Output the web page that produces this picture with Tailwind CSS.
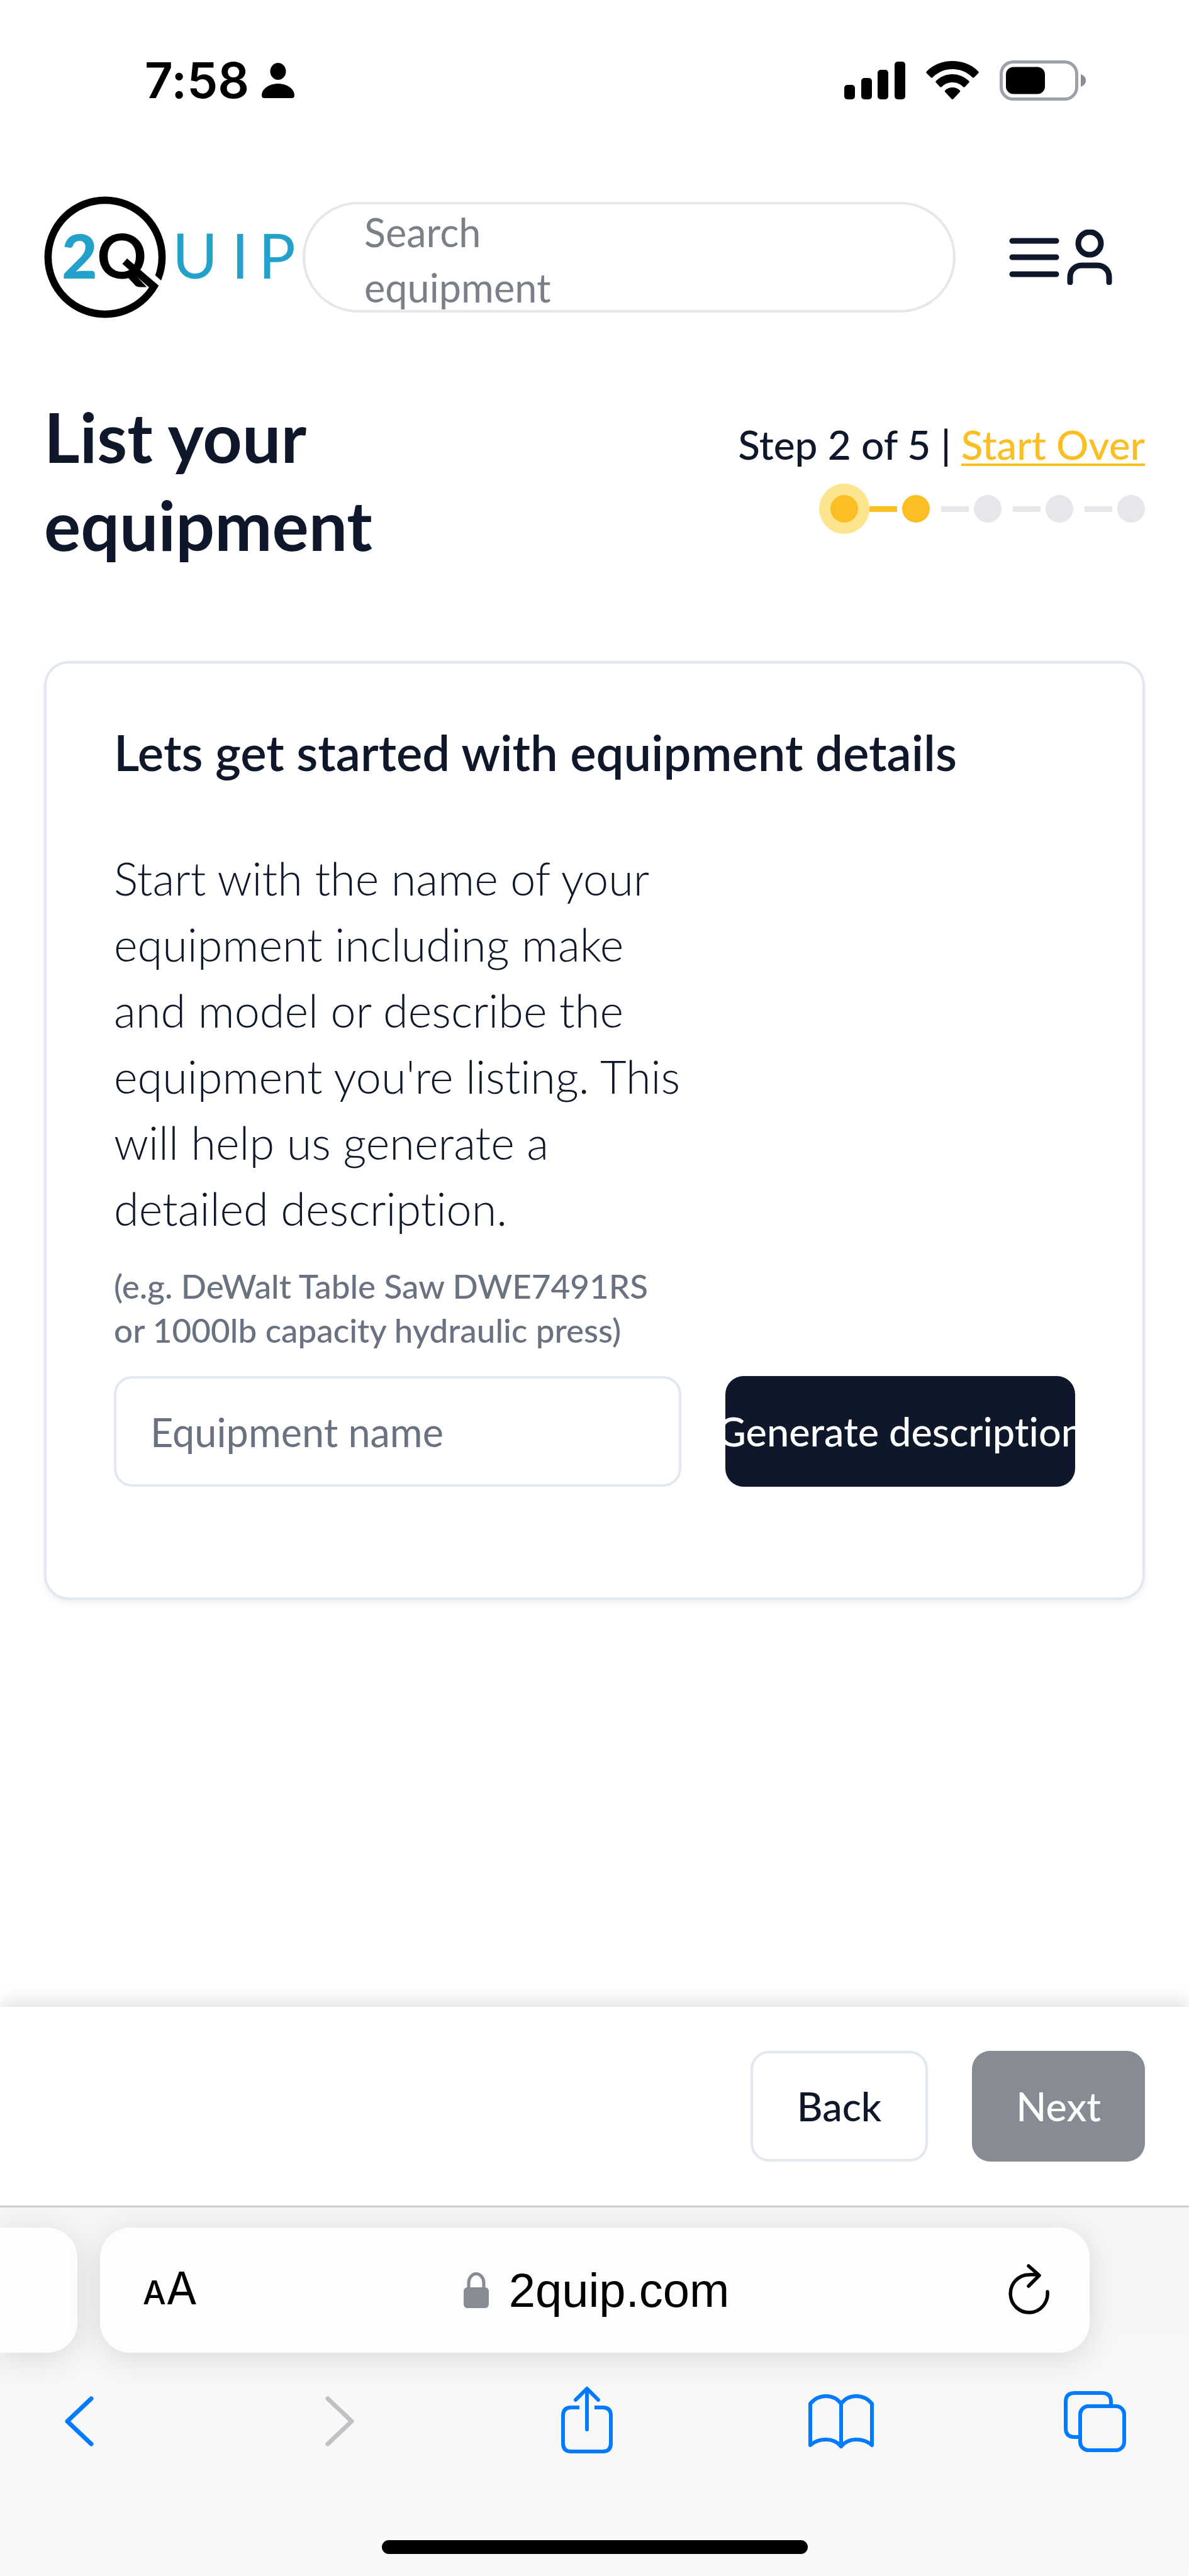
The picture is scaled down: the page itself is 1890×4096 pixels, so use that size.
<!DOCTYPE html>
<html lang="en">
<head>
    <meta charset="UTF-8">
    <meta name="viewport" content="width=device-width, initial-scale=1.0">
    <title>2Quip - List your equipment</title>
    <script src="https://cdn.jsdelivr.net/npm/@tailwindcss/browser@4"></script>
</head>
<body class="bg-white font-['Lato',sans-serif] [font-variant-ligatures:none] text-[#0f172a] text-[63px] leading-[88px] min-h-screen flex flex-col overflow-x-hidden">

    <!-- Status bar -->
    <div class="flex items-center justify-between pl-[230px] pr-[164px] pt-[84px] text-black">
        <div class="flex items-center gap-[20px]">
            <span class="font-['Inter',sans-serif] font-semibold text-[78px]">7:58</span>
            <svg class="w-[52px] h-[56px]" viewBox="0 0 52 56" fill="currentColor" aria-hidden="true">
                <ellipse cx="26" cy="13.5" rx="12.5" ry="13.5"/>
                <path d="M26 33c15 0 26 9 26 18.500c0 3-1.500 4.500-4.500 4.500h-43c-3 0-4.500-1.500-4.500-4.500C0 42 11 33 26 33z"/>
            </svg>
        </div>
        <div class="flex items-center">
            <svg class="w-[97px] h-[64px]" viewBox="0 0 97 64" fill="currentColor" aria-hidden="true">
                <rect x="0" y="39" width="17" height="23" rx="5"/>
                <rect x="27" y="28" width="17" height="34" rx="5"/>
                <rect x="53" y="15" width="17" height="47" rx="5"/>
                <rect x="80" y="2" width="17" height="60" rx="5"/>
            </svg>
            <svg class="w-[84px] h-[64px] ml-[33px]" viewBox="0 0 84 64" fill="currentColor" aria-hidden="true">
                <path d="M42 1C26 1 11 7 1 17.500q-1.500 1.500 0 3L7.500 27q1.500 1.500 3 0C19 18.500 30 14 42 14s23 4.500 31.500 13q1.500 1.500 3 0L83 20.500q1.500-1.500 0-3C73 7 58 1 42 1z"/>
                <path d="M42 22c-10 0-19 4-26 10.500q-1.500 1.500 0 3l6 6.500q1.500 1.500 3 0c4.500-4.500 10.500-7 17-7s12.500 2.500 17 7q1.500 1.500 3 0l6-6.500q1.500-1.500 0-3C61 26 52 22 42 22z"/>
                <path d="M42 43c-4.500 0-8.500 1.500-11.500 4.500q-1.500 1.500 0 3l10 10.700q1.500 1.500 3 0l10-10.700q1.500-1.500 0-3C50.500 44.500 46.500 43 42 43z"/>
            </svg>
            <svg class="w-[137px] h-[64px] ml-[33px]" viewBox="0 0 137 64" aria-hidden="true">
                <rect x="2.500" y="2.500" width="120" height="59" rx="19" fill="none" stroke="#9ca0a8" stroke-width="5"/>
                <rect x="10" y="10.500" width="62" height="43" rx="12" fill="black"/>
                <path d="M129 22q8 3 8 10t-8 10z" fill="#878b94"/>
            </svg>
        </div>
    </div>

    <!-- Site header -->
    <header class="flex items-center pl-[70px] pr-[122px] mt-[140px]">
        <a href="#" class="shrink-0" aria-label="2Quip home">
            <svg class="w-[411px] h-[194px]" viewBox="0 0 411 194" aria-hidden="true">
                <circle cx="97" cy="97" r="90.6" fill="none" stroke="black" stroke-width="11.6"/>
                <path d="M170 126L200 152" stroke="white" stroke-width="9"/>
                <path d="M132 99L182 142L174 154L167 145L124.500 107.400z"/>
                <text x="28" y="131" font-size="98" font-weight="900" fill="#24a1cb">2</text>
                <text x="84" y="131" font-size="98" font-weight="700">Q</text>
                <text x="204 298 341" y="131" font-size="98" font-weight="400" fill="#24a1cb">UIP</text>
            </svg>
        </a>
        <label for="search" class="sr-only">Search equipment</label>
        <textarea id="search" rows="2" placeholder="Search equipment" class="block grow h-[176px] border-4 border-gray-200 rounded-full pl-[94px] pr-[540px] resize-none overflow-hidden outline-none placeholder:text-[#7b7f88]"></textarea>
        <button aria-label="Menu" class="ml-[81px]">
            <svg class="w-[88px] h-[88px]" viewBox="0 0 88 88" fill="none" stroke="currentColor" stroke-width="9" stroke-linecap="round" aria-hidden="true">
                <path d="M9 18H79M9 44H79M9 71H79"/>
            </svg>
        </button>
        <button aria-label="Account">
            <svg class="w-[80px] h-[88px]" viewBox="0 0 80 88" fill="none" stroke="currentColor" stroke-width="9" stroke-linecap="round" aria-hidden="true">
                <circle cx="44" cy="22" r="18"/>
                <path d="M13 84V75A18 18 0 0 1 31 57H57A18 18 0 0 1 75 75V84"/>
            </svg>
        </button>
    </header>

    <main class="grow px-[70px] pt-[118px]">

        <!-- Title and steps -->
        <div class="flex justify-between">
            <h1 class="w-[600px] text-[109px] leading-[140px] font-bold">List your equipment</h1>
            <div class="flex flex-col items-end pt-[39px]">
                <p class="text-[64px] font-medium">Step 2 of 5 | <a href="#" class="text-[#fbbf24] underline underline-offset-[6px] decoration-4">Start Over</a></p>
                <ol class="flex items-center mt-[36px]" aria-label="Progress">
                    <li class="size-[44px] rounded-full bg-[#fbbf24] ring-[18px] ring-[#fde58f]"></li>
                    <li class="w-[44px] h-[9px] ml-[18px] mr-[8px] bg-[#fbbf24]"></li>
                    <li class="size-[44px] rounded-full bg-[#fbbf24]"></li>
                    <li class="w-[44px] h-[9px] ml-[18px] mr-[8px] bg-gray-200"></li>
                    <li class="size-[44px] rounded-full bg-gray-200"></li>
                    <li class="w-[44px] h-[9px] ml-[18px] mr-[8px] bg-gray-200"></li>
                    <li class="size-[44px] rounded-full bg-gray-200"></li>
                    <li class="w-[44px] h-[9px] ml-[18px] mr-[8px] bg-gray-200"></li>
                    <li class="size-[44px] rounded-full bg-gray-200"></li>
                </ol>
            </div>
        </div>

        <!-- Equipment details card -->
        <section class="mt-[147px] border-4 border-slate-200 rounded-[39px] px-[107px] pt-[89px] pb-[176px] shadow-[0_5px_10px_rgba(0,0,0,0.06)]">
            <h2 class="text-[78px] leading-[104px] font-semibold">Lets get started with equipment details</h2>
            <form class="grid grid-cols-[902fr_556fr] gap-x-[70px] mt-[96px]">
                <div class="col-start-1">
                    <p class="text-[72px] leading-[105px] font-light">Start with the name of your equipment including make and model or describe the equipment you're listing. This will help us generate a detailed description.</p>
                    <label for="equipment" class="block mt-[36px] text-[53px] leading-[70px] font-medium text-gray-500">(e.g. DeWalt Table Saw DWE7491RS or 1000lb capacity hydraulic press)</label>
                </div>
                <input id="equipment" type="text" placeholder="Equipment name" class="col-start-1 min-w-0 mt-[38px] h-[176px] border-4 border-slate-200 rounded-[29px] px-[54px] outline-none placeholder:text-gray-500">
                <button type="button" class="min-w-0 mt-[38px] h-[176px] rounded-[29px] bg-[#0f172a] text-white font-medium whitespace-nowrap flex items-center justify-center">Generate description</button>
            </form>
        </section>
    </main>

    <!-- Wizard actions -->
    <footer class="flex justify-end gap-[70px] p-[70px] bg-white font-medium shadow-[0_-5px_30px_rgba(0,0,0,0.15)]">
        <button class="h-[176px] px-[70px] border-4 border-slate-200 rounded-[29px]">Back</button>
        <button class="h-[176px] px-[70px] rounded-[29px] bg-[#878b94] text-white" disabled>Next</button>
    </footer>

    <!-- Browser toolbar -->
    <nav class="border-t-3 border-[#cccccc] bg-linear-to-b from-[#f6f6f6] to-[#f9f9f9] pt-[32px] pb-[35px] overflow-hidden text-black">
        <div class="flex gap-[36px]">
            <div class="w-[123px] h-[199px] shrink-0 rounded-r-[48px] bg-[#fdfdfd] shadow-[0_8px_50px_rgba(0,0,0,0.12)]"></div>
            <div class="grow mr-[158px] h-[199px] pl-[68px] pr-[63px] rounded-[48px] bg-[#fdfdfd] shadow-[0_8px_50px_rgba(0,0,0,0.12)] grid grid-cols-[1fr_auto_1fr] items-center font-['Liberation_Sans',sans-serif]">
                <button aria-label="Page settings" class="justify-self-start flex items-baseline font-['Inter',sans-serif]"><span class="text-[52px] font-medium">A</span><span class="text-[72px]">A</span></button>
                <a href="#" class="flex items-center gap-[32px] text-[76px]">
                    <svg class="w-[40px] h-[57px]" viewBox="0 0 40 57" aria-hidden="true">
                        <path d="M8 27V17a12 14.500 0 0 1 24 0V27" fill="none" stroke="#878b94" stroke-width="5"/>
                        <rect x="0" y="24" width="40" height="33" rx="6" fill="#878b94"/>
                    </svg>
                    2quip.com
                </a>
                <button aria-label="Reload" class="justify-self-end">
                    <svg class="w-[66px] h-[84px]" viewBox="0 0 66 84" fill="none" stroke="currentColor" stroke-width="5.500" stroke-linecap="round" stroke-linejoin="round" aria-hidden="true">
                        <path d="M62 44A29.500 30 0 1 1 33 17Q42 16 48 18"/>
                        <path d="M32 3L49 18L32 35"/>
                    </svg>
                </button>
            </div>
        </div>
        <div class="flex items-center justify-between pl-[70px] pr-[94px] mt-[51px] text-[#007aff]">
            <button aria-label="Back" class="w-[112px] flex justify-center">
                <svg class="w-[50px] h-[112px]" viewBox="0 0 50 112" fill="none" stroke="currentColor" stroke-width="7" stroke-linecap="round" stroke-linejoin="round" aria-hidden="true"><path d="M44 22L6 58L44 94"/></svg>
            </button>
            <button aria-label="Forward" class="w-[112px] flex justify-center text-[#c0c1c5]" disabled>
                <svg class="w-[70px] h-[112px]" viewBox="0 0 70 112" fill="none" stroke="currentColor" stroke-width="7" stroke-linecap="round" stroke-linejoin="round" aria-hidden="true"><path d="M26 22L64 58L26 94"/></svg>
            </button>
            <button aria-label="Share" class="w-[112px] flex justify-center">
                <svg class="w-[84px] h-[112px]" viewBox="0 0 84 112" fill="none" stroke="currentColor" stroke-width="6" stroke-linecap="round" stroke-linejoin="round" aria-hidden="true">
                    <path stroke-linecap="butt" d="M30 36H17Q4 36 4 49V93Q4 106 17 106H67Q80 106 80 93V49Q80 36 67 36H54"/>
                    <path d="M42 71V7M24 24L42 6L60 24"/>
                </svg>
            </button>
            <button aria-label="Bookmarks" class="w-[112px] flex justify-center">
                <svg class="w-[104px] h-[112px]" viewBox="0 0 104 112" fill="none" stroke="currentColor" stroke-width="6" stroke-linecap="round" stroke-linejoin="round" aria-hidden="true">
                    <path d="M52 98V30Q43 18 28 18T3 30V96Q13 87 28 87T52 98Q61 87 76 87T101 96V30Q91 18 76 18T52 30"/>
                </svg>
            </button>
            <button aria-label="Tabs" class="w-[112px] flex justify-center">
                <svg class="w-[100px] h-[112px]" viewBox="0 0 100 112" fill="none" stroke="currentColor" stroke-width="6" stroke-linejoin="round" aria-hidden="true">
                    <path d="M27 83H18Q4 83 4 69V27Q4 13 18 13H62Q76 13 76 27V34"/>
                    <rect x="27" y="34" width="70" height="70" rx="13"/>
                </svg>
            </button>
        </div>
        <div class="mx-auto mt-[135px] w-[677px] h-[22px] rounded-full bg-black"></div>
    </nav>

</body>
</html>
